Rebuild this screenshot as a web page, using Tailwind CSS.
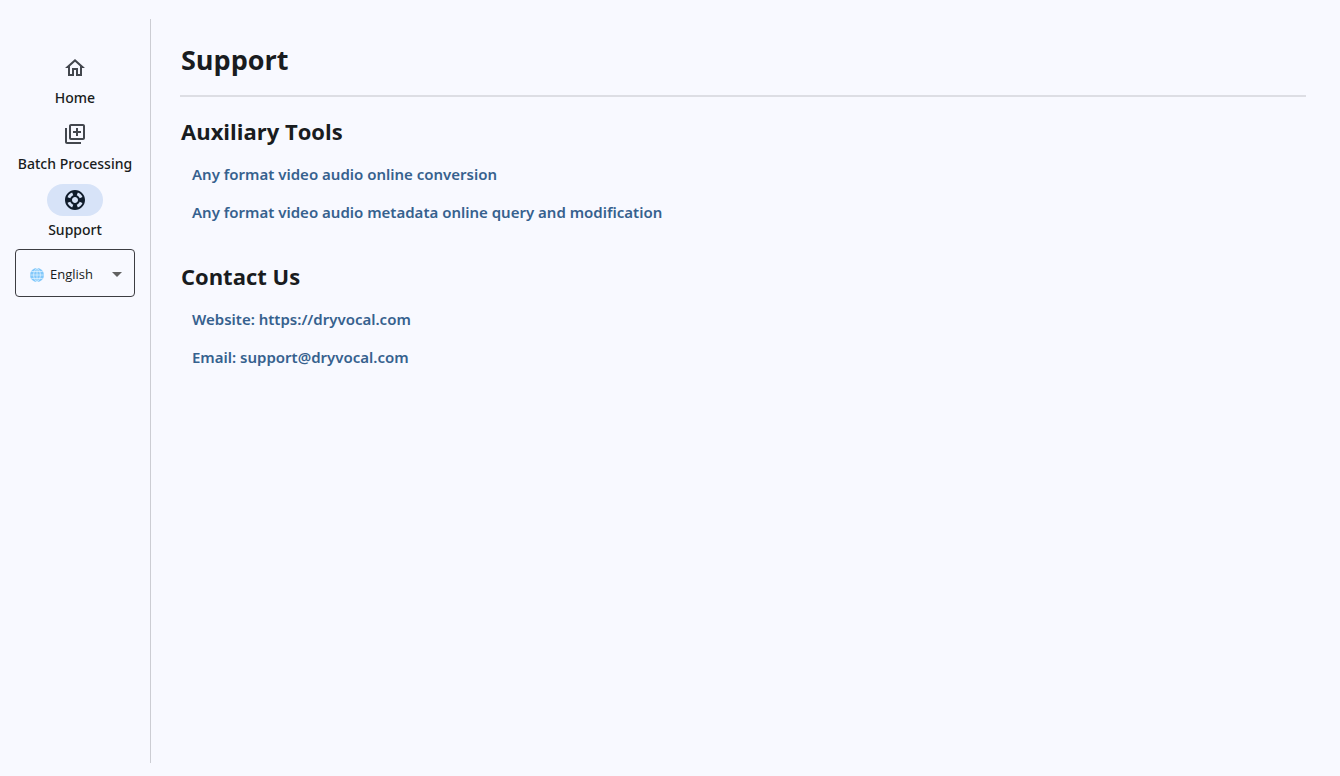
<!DOCTYPE html>
<html lang="en">
<head>
    <meta charset="UTF-8">
    <meta name="viewport" content="width=device-width, initial-scale=1.0">
    <title>Support</title>
    <script src="https://cdn.jsdelivr.net/npm/@tailwindcss/browser@4"></script>
</head>
<body class="bg-[#f8f9ff] text-[#191c20] font-['Open_Sans','Noto_Sans',sans-serif]">
    <div class="flex min-h-screen pt-[19px] pb-[13px]">
        <!-- Sidebar -->
        <aside class="w-[151px] shrink-0 border-r border-[#cccdd3] pt-[33px]">
            <nav class="flex flex-col gap-2.5 font-['Noto_Sans',sans-serif] text-sm leading-5 font-medium">
                <a href="#" class="flex flex-col items-center gap-1">
                    <span class="flex h-8 w-14 items-center justify-center rounded-full text-[#43474e]">
                        <svg class="size-6" viewBox="0 0 24 24" fill="currentColor"><path d="M12 5.69l5 4.5V18h-2v-6H9v6H7v-7.81l5-4.5M12 3L2 12h3v8h6v-6h2v6h6v-8h3L12 3z"/></svg>
                    </span>
                    <span>Home</span>
                </a>
                <a href="#" class="flex flex-col items-center gap-1">
                    <span class="flex h-8 w-14 items-center justify-center rounded-full text-[#43474e]">
                        <svg class="size-6" viewBox="0 0 24 24" fill="currentColor"><path d="M4 6H2v14c0 1.1.9 2 2 2h14v-2H4V6zm16-4H8c-1.1 0-2 .9-2 2v12c0 1.1.9 2 2 2h12c1.1 0 2-.9 2-2V4c0-1.1-.9-2-2-2zm0 14H8V4h12v12zm-7-2h2v-3h3V9h-3V6h-2v3h-3v2h3v3z"/></svg>
                    </span>
                    <span class="whitespace-nowrap">Batch Processing</span>
                </a>
                <a href="#" aria-current="page" class="flex flex-col items-center gap-1">
                    <span class="flex h-8 w-14 items-center justify-center rounded-full bg-[#d7e3f8] text-[#101c2b]">
                        <svg class="size-6" viewBox="0 0 24 24" fill="currentColor"><path d="M12 2C6.48 2 2 6.48 2 12s4.48 10 10 10 10-4.48 10-10S17.52 2 12 2zm7.46 7.12l-2.78 1.15c-.51-1.36-1.58-2.44-2.95-2.94l1.15-2.78c2.1.8 3.77 2.47 4.58 4.57zM12 15c-1.66 0-3-1.34-3-3s1.34-3 3-3 3 1.34 3 3-1.34 3-3 3zM9.13 4.54l1.17 2.78c-1.38.5-2.47 1.59-2.98 2.97L4.54 9.13c.81-2.11 2.48-3.78 4.59-4.59zM4.54 14.87l2.78-1.15c.51 1.38 1.59 2.46 2.97 2.96l-1.17 2.78c-2.1-.81-3.77-2.48-4.58-4.59zm10.34 4.59l-1.15-2.78c1.37-.51 2.45-1.59 2.95-2.97l2.78 1.17c-.81 2.1-2.48 3.77-4.58 4.58z"/></svg>
                    </span>
                    <span>Support</span>
                </a>
            </nav>
            <div class="relative mx-[15px] mt-[9px]">
                <select id="language" aria-label="Language" class="block h-12 w-full appearance-none rounded border border-[#3d3d42] bg-transparent pt-1 pl-[34px] text-[13px]">
                    <option>English</option>
                </select>
                <label for="language" class="absolute top-[18px] left-3.5">
                    <svg class="size-4" viewBox="0 0 16 16" fill="none">
                        <circle cx="8" cy="8" r="7" fill="#82c8fb"/>
                        <path d="M8 1v14M1 8h14M2.3 4.5h11.4M2.3 11.5h11.4M8 1C3.5 4.5 3.5 11.5 8 15M8 1c4.5 3.5 4.5 10.5 0 14" stroke="#e6f5ff" stroke-width=".7"/>
                    </svg>
                </label>
                <svg class="pointer-events-none absolute top-[13px] right-1.5 size-6" viewBox="0 0 24 24" fill="#616161"><path d="M7 10l5 5 5-5z"/></svg>
            </div>
        </aside>

        <!-- Content -->
        <main class="min-w-0 flex-1 pt-[21px] pr-[34px] pl-[29px]">
            <h1 class="border-b-2 border-[#dddee4] pb-[15px] pl-px text-[27px] leading-10 font-bold">Support</h1>
            <section class="pt-3.5 pl-px">
                <h2 class="text-[22px] leading-10 font-bold">Auxiliary Tools</h2>
                <ul class="pt-1 pl-[11px] font-['Noto_Sans',sans-serif] text-[15px] leading-[38px] font-semibold text-[#36618e]">
                    <li><a href="#">Any format video audio online conversion</a></li>
                    <li><a href="#">Any format video audio metadata online query and modification</a></li>
                </ul>
            </section>
            <section class="pt-[25px] pl-px">
                <h2 class="text-[22px] leading-10 font-bold">Contact Us</h2>
                <ul class="pt-1 pl-[11px] font-['Noto_Sans',sans-serif] text-[15px] leading-[38px] font-semibold text-[#36618e]">
                    <li><a href="https://dryvocal.com">Website: https://dryvocal.com</a></li>
                    <li><a href="mailto:support@dryvocal.com">Email: support@dryvocal.com</a></li>
                </ul>
            </section>
        </main>
    </div>
</body>
</html>
